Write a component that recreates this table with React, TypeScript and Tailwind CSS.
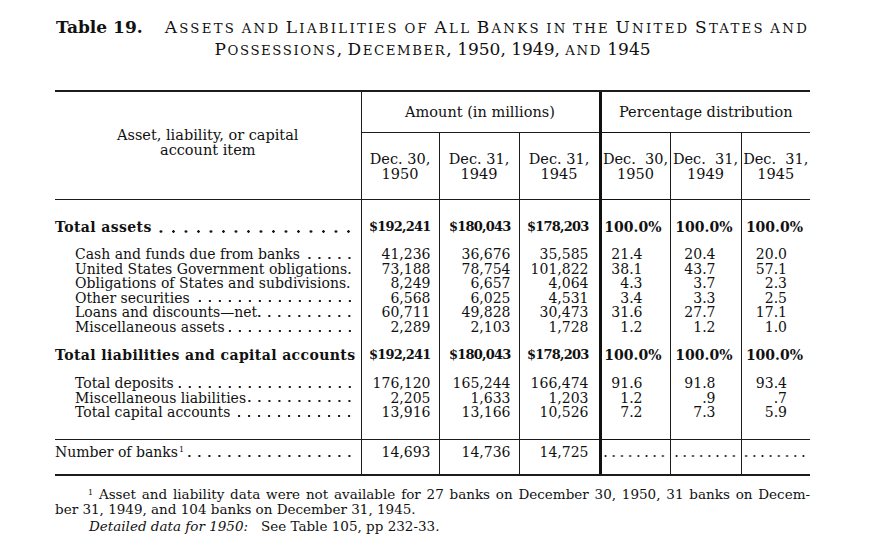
import React from "react";

const LINE = "border-[#1c1c1c]";

const colBorder = [
  "border-l border-[#1c1c1c]",
  "border-l border-[#1c1c1c]",
  "border-l border-[#1c1c1c]",
  "border-l-[3px] border-[#111]",
  "border-l border-[#1c1c1c]",
  "border-l border-[#1c1c1c]",
];
const padReg = ["pr-[8px]", "pr-[8px]", "pr-[10px]", "pr-[27px]", "pr-[25px]", "pr-[23px]"];
const padTot = ["pr-[8px]", "pr-[8px]", "pr-[10px]", "pr-[8px]", "pr-[8px]", "pr-[7px]"];

function Leader({ bold = false, dense = false }: { bold?: boolean; dense?: boolean }) {
  if (bold)
    return (
      <span className="flex-1 min-w-0 self-end mb-[2px] ml-[1px] h-[3px] bg-[radial-gradient(circle,#151515_1.1px,transparent_1.5px)] bg-[length:12.5px_3px] bg-repeat-x bg-right" />
    );
  if (dense)
    return (
      <span className="flex-1 min-w-0 self-end mb-[3px] h-[2px] bg-[radial-gradient(circle,#1a1a1a_0.8px,transparent_1.2px)] bg-[length:8.2px_2px] bg-repeat-x bg-right" />
    );
  return (
    <span className="flex-1 min-w-0 self-end mb-[3px] ml-[1px] h-[2px] bg-[radial-gradient(circle,#1a1a1a_0.8px,transparent_1.2px)] bg-[length:10px_2px] bg-repeat-x bg-right" />
  );
}

function SC({ text, track }: { text: string; track: string }) {
  const parts = text.split(/([A-Za-z]+)/);
  return (
    <>
      {parts.map((p, i) => {
        if (/^[A-Za-z]+$/.test(p)) {
          const first = p[0];
          const isCap = first === first.toUpperCase();
          return (
            <span key={i} className={track}>
              {isCap ? first : <span className="text-[0.78em] uppercase">{first}</span>}
              <span className="text-[0.78em] uppercase">{p.slice(1)}</span>
            </span>
          );
        }
        return <span key={i}>{p}</span>;
      })}
    </>
  );
}

type RowProps = {
  label: React.ReactNode;
  values: string[];
  kind: "total" | "detail";
  box: string;
  topRule?: boolean;
  noLeader?: boolean;
};

function Row({ label, values, kind, box, topRule, noLeader }: RowProps) {
  const bold = kind === "total";
  const t = topRule ? "border-t border-[#1c1c1c]" : "";
  return (
    <tr>
      <td className={`p-0 align-top ${t}`}>
        <div className={box}>
          <div
            className={`flex h-[14.6px] pr-[6px] whitespace-nowrap ${
              bold ? "font-bold tracking-[0.4px]" : "pl-[20px]"
            }`}
          >
            <span>{label}</span>
            {!noLeader && <Leader bold={bold} />}
          </div>
        </div>
      </td>
      {values.map((v, i) => (
        <td key={i} className={`p-0 align-top ${colBorder[i]} ${t}`}>
          <div
            className={`${box} text-right whitespace-nowrap ${
              bold
                ? i < 3
                  ? "font-bold text-[13px] tracking-[-0.8px] " + padTot[i]
                  : "font-bold " + padTot[i]
                : padReg[i]
            }`}
          >
            {v}
          </div>
        </td>
      ))}
    </tr>
  );
}

const assets: [string, string[]][] = [
  ["Cash and funds due from banks", ["41,236", "36,676", "35,585", "21.4", "20.4", "20.0"]],
  ["United States Government obligations.", ["73,188", "78,754", "101,822", "38.1", "43.7", "57.1"]],
  ["Obligations of States and subdivisions.", ["8,249", "6,657", "4,064", "4.3", "3.7", "2.3"]],
  ["Other securities", ["6,568", "6,025", "4,531", "3.4", "3.3", "2.5"]],
  ["Loans and discounts\u2014net", ["60,711", "49,828", "30,473", "31.6", "27.7", "17.1"]],
  ["Miscellaneous assets", ["2,289", "2,103", "1,728", "1.2", "1.2", "1.0"]],
];

const liabs: [string, string[]][] = [
  ["Total deposits", ["176,120", "165,244", "166,474", "91.6", "91.8", "93.4"]],
  ["Miscellaneous liabilities", ["2,205", "1,633", "1,203", "1.2", ".9", ".7"]],
  ["Total capital accounts", ["13,916", "13,166", "10,526", "7.2", "7.3", "5.9"]],
];

const heads = [
  ["Dec. 30,", "1950"],
  ["Dec. 31,", "1949"],
  ["Dec. 31,", "1945"],
  ["Dec.\u00a0 30,", "1950"],
  ["Dec.\u00a0 31,", "1949"],
  ["Dec.\u00a0 31,", "1945"],
];

export default function App() {
  return (
    <div className="w-[880px] h-[550px] bg-white text-[#111] font-['DejaVu_Serif',serif] overflow-hidden">
      <div className="pl-[55px] pt-[17px] w-[810px]">
        <div className="text-center text-[17px] leading-[21px] whitespace-nowrap">
          <div>
            <span className="font-bold">Table 19.</span>
            <span className="inline-block w-[22px]" />
            <SC text="Assets and Liabilities of All Banks in the United States and" track="tracking-[2.3px]" />
          </div>
          <div>
            <SC text="Possessions, December, 1950, 1949, and 1945" track="tracking-[1.6px]" />
          </div>
        </div>

        <div className={`mt-[29px] w-[755px] border-t-2 border-b-2 ${LINE}`}>
          <table className="w-[755px] table-fixed border-collapse text-[14px] leading-[14.6px]">
            <colgroup>
              <col className="w-[306px]" />
              <col className="w-[78px]" />
              <col className="w-[80px]" />
              <col className="w-[81px]" />
              <col className="w-[70px]" />
              <col className="w-[71px]" />
              <col className="w-[69px]" />
            </colgroup>
            <thead>
              <tr>
                <th rowSpan={2} className="p-0 font-normal align-middle">
                  <div className="pb-[6px] text-center text-[14.5px] leading-[15px]">
                    Asset, liability, or capital
                    <br />
                    account item
                  </div>
                </th>
                <th colSpan={3} className={`p-0 font-normal ${colBorder[0]}`}>
                  <div className="h-[40px] flex items-center justify-center pt-[1px] text-[14.5px]">
                    Amount (in millions)
                  </div>
                </th>
                <th colSpan={3} className={`p-0 font-normal ${colBorder[3]}`}>
                  <div className="h-[40px] flex items-center justify-center pt-[1px] text-[14.5px]">
                    Percentage distribution
                  </div>
                </th>
              </tr>
              <tr>
                {heads.map((h, i) => (
                  <th key={i} className={`p-0 font-normal border-t border-[#1c1c1c] ${colBorder[i]}`}>
                    <div className="h-[66px] flex flex-col items-center justify-center whitespace-nowrap pt-[2px] text-[14.5px] leading-[15px]">
                      <span>{h[0]}</span>
                      <span>{h[1]}</span>
                    </div>
                  </th>
                ))}
              </tr>
            </thead>
            <tbody>
              <Row
                label="Total assets"
                values={["$192,241", "$180,043", "$178,203", "100.0%", "100.0%", "100.0%"]}
                kind="total"
                box="h-[47px] pt-[20px]"
                topRule
              />
              {assets.map(([l, v], i) => (
                <Row key={l} label={l} values={v} kind="detail" box="h-[14.6px]" noLeader={i === 1 || i === 2} />
              ))}
              <Row
                label="Total liabilities and capital accounts"
                values={["$192,241", "$180,043", "$178,203", "100.0%", "100.0%", "100.0%"]}
                kind="total"
                box="h-[41.4px] pt-[13px]"
                noLeader
              />
              {liabs.map(([l, v], i) => (
                <Row key={l} label={l} values={v} kind="detail" box={i === 2 ? "h-[33.8px]" : "h-[14.6px]"} />
              ))}
              <tr>
                <td className="p-0 align-top border-t border-[#1c1c1c]">
                  <div className="h-[34px] pt-[5px]">
                    <div className="flex h-[14.6px] pr-[6px] whitespace-nowrap">
                      <span>
                        Number of banks
                        <span className="text-[8px] leading-none relative top-[-5px] ml-[1px]">1</span>
                      </span>
                      <Leader />
                    </div>
                  </div>
                </td>
                {["14,693", "14,736", "14,725"].map((v, i) => (
                  <td key={v} className={`p-0 align-top border-t border-[#1c1c1c] ${colBorder[i]}`}>
                    <div className={`h-[34px] pt-[5px] text-right ${padReg[i]}`}>{v}</div>
                  </td>
                ))}
                {[3, 4, 5].map((i) => (
                  <td key={i} className={`p-0 align-top border-t border-[#1c1c1c] ${colBorder[i]}`}>
                    <div className="h-[34px] pt-[5px]">
                      <div className="flex h-[14.6px] pl-[2px] pr-[3px]">
                        <Leader dense />
                      </div>
                    </div>
                  </td>
                ))}
              </tr>
            </tbody>
          </table>
        </div>

        <div className="w-[755px] mt-[11px] text-[13.5px] leading-[15px] text-[#111]">
          <div className="pl-[33px] whitespace-nowrap text-justify [text-align-last:justify]">
            <span className="text-[8px] leading-none relative top-[-4px]">1</span> Asset and liability data were not
            available for 27 banks on December 30, 1950, 31 banks on Decem-
          </div>
          <div className="whitespace-nowrap">ber 31, 1949, and 104 banks on December 31, 1945.</div>
          <div className="pl-[34px] mt-[2px] whitespace-nowrap">
            <span className="italic">Detailed data for 1950:</span>
            {"\u00a0\u00a0 "}See Table 105, pp 232-33.
          </div>
        </div>
      </div>
    </div>
  );
}
